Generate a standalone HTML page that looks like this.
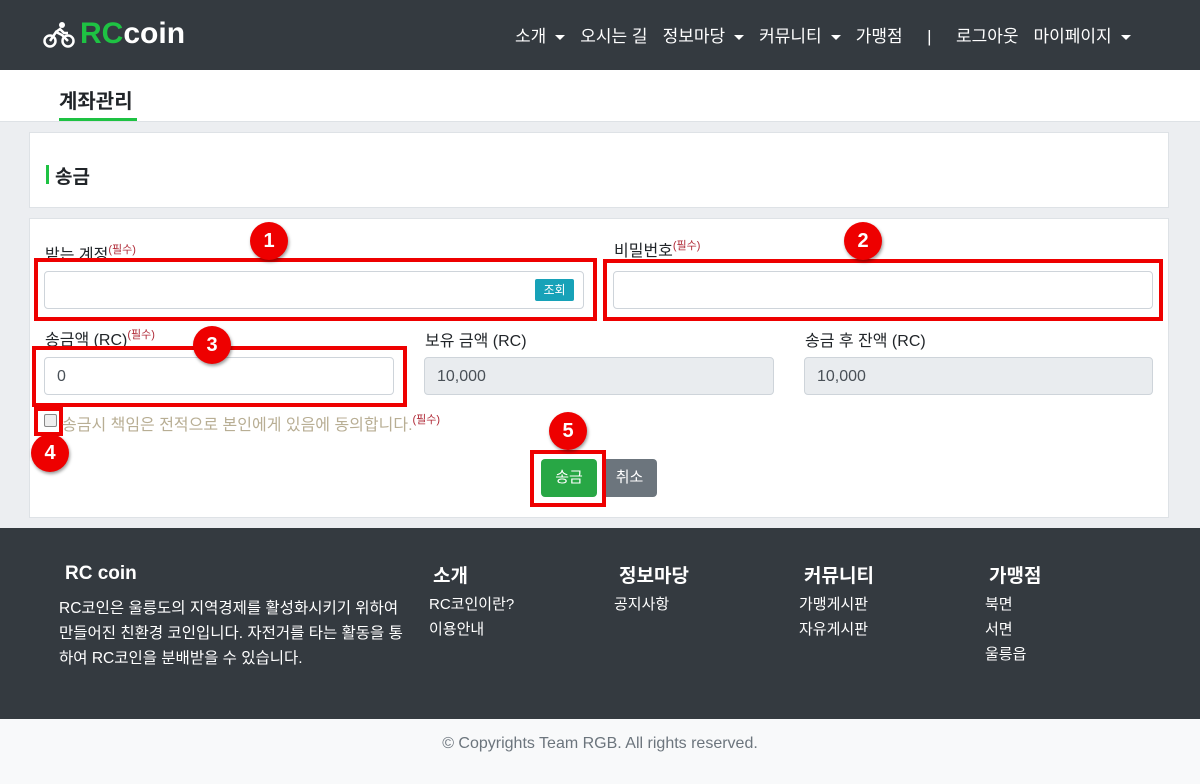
<!DOCTYPE html>
<html><head><meta charset="utf-8"><style>
*{box-sizing:border-box;margin:0;padding:0}
body{width:1200px;height:784px;position:relative;background:#eceef1;font-family:"Liberation Sans","Noto Sans CJK KR",sans-serif;color:#212529;overflow:hidden}
.a{position:absolute}
.nav{top:0;left:0;width:1200px;height:70px;background:#343a40}
.menu{top:22px;color:#fff;font-size:17px;white-space:nowrap}
.menu span{margin-right:15px}
.car{display:inline-block;border-left:5px solid transparent;border-right:5px solid transparent;border-top:5px solid #fff;vertical-align:middle;margin-left:9px}
.sub{top:70px;left:0;width:1200px;height:52px;background:#fff;border-bottom:1px solid #dee2e6}
.card{background:#fff;border:1px solid #dee2e6}
.lbl{font-size:16px}
.req{font-size:11px;color:#b02a37;vertical-align:top}
.inp{border:1px solid #ced4da;border-radius:4px;background:#fff;height:38px;font-size:16px;color:#495057;padding:10px 12px 0}
.dis{background:#e9ecef}
.red{border:4px solid #e00;}
.num{width:38px;height:38px;border-radius:50%;background:#e00;color:#fff;font-weight:bold;font-size:20px;text-align:center;line-height:38px;box-shadow:1px 2px 3px rgba(0,0,0,.4)}
.foot{top:528px;left:0;width:1200px;height:191px;background:#343a40;color:#fff}
.foot h4{font-size:19px;font-weight:bold}
.foot p{font-size:15px;line-height:25px}
.copy{top:719px;left:0;width:1200px;height:65px;background:#f8f9fa;text-align:center;line-height:50px;color:#6c757d;font-size:16px}
</style></head><body>
<div class="a nav"></div>
<svg class="a" style="left:43px;top:21px" width="32" height="28" viewBox="0 0 32 28"><circle cx="7" cy="20" r="5.5" fill="none" stroke="#fff" stroke-width="2.5"/><circle cx="25" cy="20" r="5.5" fill="none" stroke="#fff" stroke-width="2.5"/><circle cx="19" cy="4" r="3" fill="#fff"/><path d="M7 20 L13 11 L19 14 L25 20 M13 11 L17 8 L21 12 L25 12" fill="none" stroke="#fff" stroke-width="2.5"/></svg>
<div class="a" style="left:80px;top:17px;font-size:30px;font-weight:bold;letter-spacing:0px"><span style="color:#1ec243">RC</span><span style="color:#fff">coin</span></div>
<div class="a menu" style="left:515px"><span>소개<i class="car"></i></span><span>오시는 길</span><span>정보마당<i class="car"></i></span><span>커뮤니티<i class="car"></i></span><span>가맹점</span><span>&nbsp;&nbsp;|&nbsp;&nbsp;</span><span>로그아웃</span><span>마이페이지<i class="car"></i></span></div>
<div class="a sub"></div>
<div class="a" style="left:59px;top:85px;font-size:20px;font-weight:bold">계좌관리</div>
<div class="a" style="left:59px;top:118px;width:78px;height:3px;background:#1ec243"></div>
<div class="a card" style="left:29px;top:132px;width:1140px;height:76px"></div>
<div class="a" style="left:46px;top:165px;width:3px;height:19px;background:#1ec243"></div>
<div class="a" style="left:55px;top:162px;font-size:19px;font-weight:bold">송금</div>
<div class="a card" style="left:29px;top:218px;width:1140px;height:300px"></div>
<div class="a lbl" style="left:45px;top:241px">받는 계정<span class="req">(필수)</span></div>
<div class="a lbl" style="left:614px;top:237px">비밀번호<span class="req">(필수)</span></div>
<div class="a inp" style="left:44px;top:271px;width:540px"></div>
<div class="a" style="left:535px;top:279px;width:39px;height:22px;background:#17a2b8;color:#fff;font-size:12px;text-align:center;line-height:22px;border-radius:2px">조회</div>
<div class="a inp" style="left:613px;top:271px;width:540px"></div>
<div class="a red" style="left:34px;top:258px;width:563px;height:63px"></div>
<div class="a red" style="left:603px;top:259px;width:560px;height:62px"></div>
<div class="a lbl" style="left:45px;top:326px">송금액 (RC)<span class="req">(필수)</span></div>
<div class="a lbl" style="left:425px;top:327px">보유 금액 (RC)</div>
<div class="a lbl" style="left:805px;top:327px">송금 후 잔액 (RC)</div>
<div class="a inp" style="left:44px;top:357px;width:350px">0</div>
<div class="a inp dis" style="left:424px;top:357px;width:350px">10,000</div>
<div class="a inp dis" style="left:804px;top:357px;width:349px">10,000</div>
<div class="a red" style="left:32px;top:346px;width:375px;height:61px"></div>
<div class="a" style="left:44px;top:414px;width:13px;height:13px;border:1px solid #888;border-radius:2px;background:#eee"></div>
<div class="a red" style="left:34px;top:407px;width:29px;height:29px"></div>
<div class="a" style="left:62px;top:411px;font-size:16px;color:#b8ae94">송금시 책임은 전적으로 본인에게 있음에 동의합니다.<span class="req" style="color:#b02a37">(필수)</span></div>
<div class="a" style="left:541px;top:459px;width:56px;height:38px;background:#28a745;color:#fff;font-size:15px;text-align:center;line-height:38px;border-radius:4px">송금</div>
<div class="a" style="left:602px;top:459px;width:55px;height:38px;background:#6c757d;color:#fff;font-size:15px;text-align:center;line-height:38px;border-radius:0 4px 4px 0">취소</div>
<div class="a red" style="left:530px;top:450px;width:76px;height:57px"></div>
<div class="a num" style="left:250px;top:222px">1</div>
<div class="a num" style="left:844px;top:222px">2</div>
<div class="a num" style="left:193px;top:326px">3</div>
<div class="a num" style="left:31px;top:434px">4</div>
<div class="a num" style="left:549px;top:412px">5</div>
<div class="a foot">
<h4 class="a" style="left:65px;top:35px">RC coin</h4>
<p class="a" style="left:59px;top:68px;width:345px;font-size:15.5px">RC코인은 울릉도의 지역경제를 활성화시키기 위하여 만들어진 친환경 코인입니다. 자전거를 타는 활동을 통하여 RC코인을 분배받을 수 있습니다.</p>
<h4 class="a" style="left:433px;top:33px">소개</h4><p class="a" style="left:429px;top:64px">RC코인이란?<br>이용안내</p>
<h4 class="a" style="left:619px;top:33px">정보마당</h4><p class="a" style="left:614px;top:64px">공지사항</p>
<h4 class="a" style="left:804px;top:33px">커뮤니티</h4><p class="a" style="left:799px;top:64px">가맹게시판<br>자유게시판</p>
<h4 class="a" style="left:989px;top:33px">가맹점</h4><p class="a" style="left:985px;top:64px">북면<br>서면<br>울릉읍</p>
</div>
<div class="a copy">© Copyrights Team RGB. All rights reserved.</div>
</body></html>
